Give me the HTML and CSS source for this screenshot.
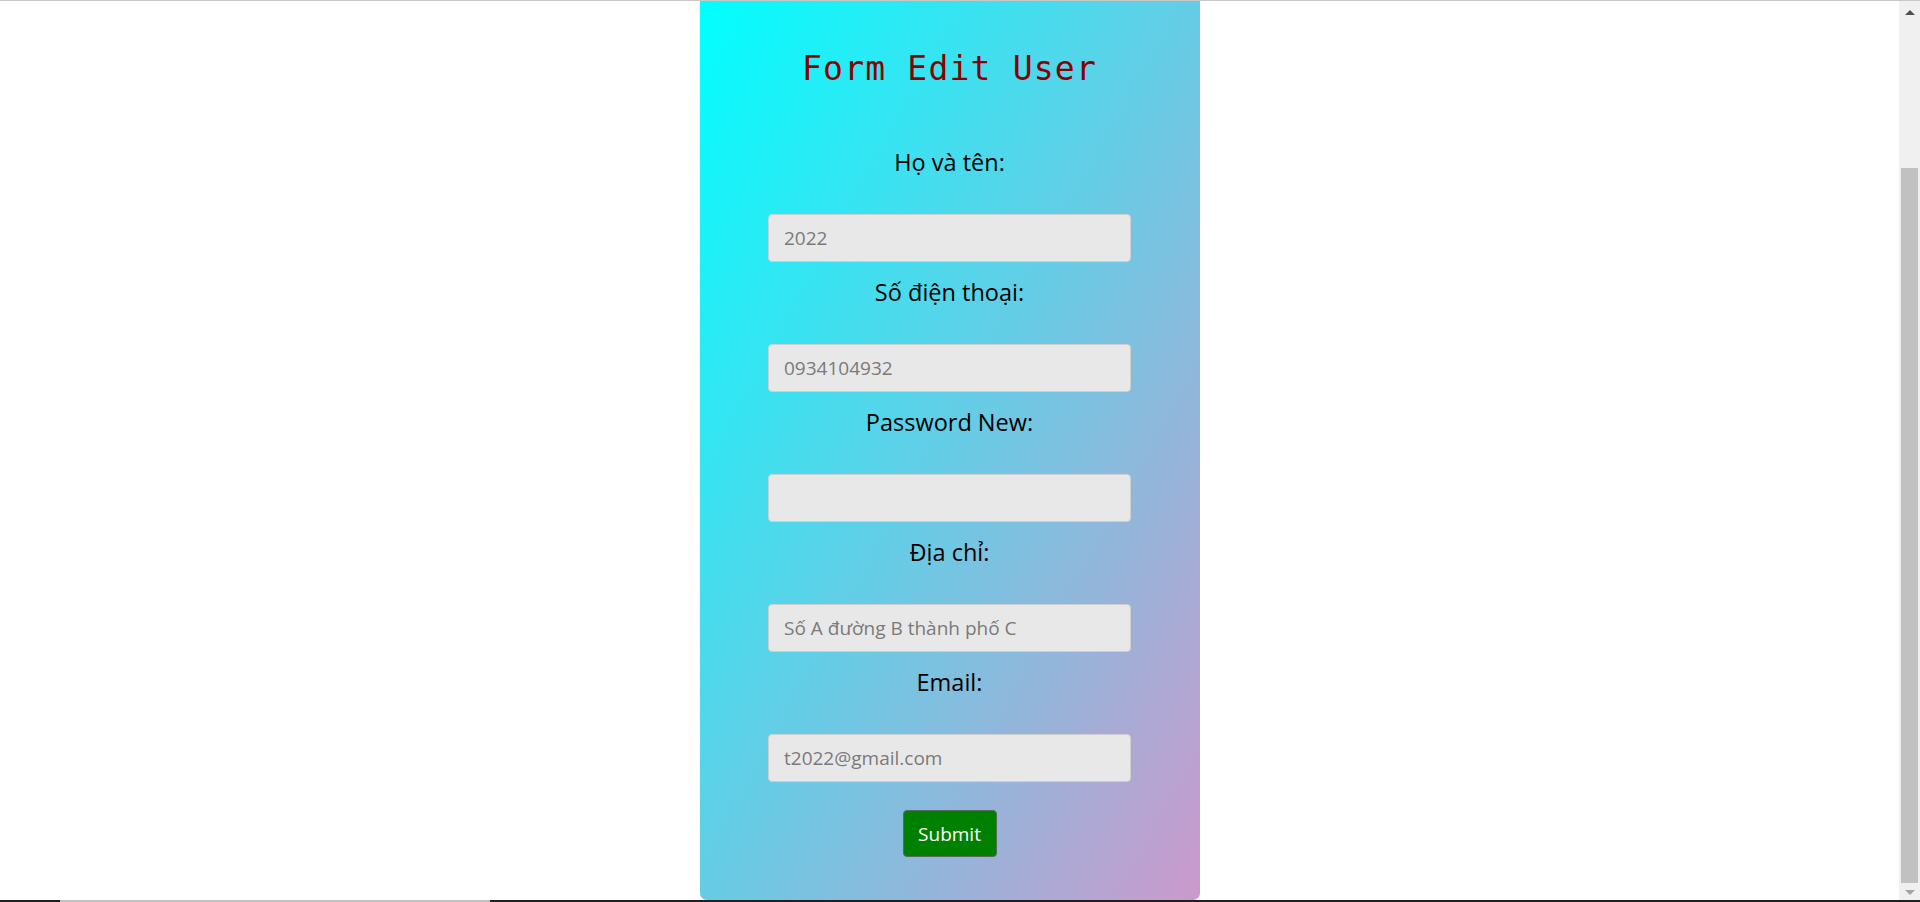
FILE: index.html
```html
<!DOCTYPE html>
<html lang="vi">
<head>
<meta charset="utf-8">
<title>Form Edit User</title>
<link rel="stylesheet" href="styles.css">
</head>
<body>
<div class="top-edge"></div>
<div class="viewport">
  <main class="page">
    <section class="card">
      <h1 class="title">Form Edit User</h1>
      <form class="form">
        <label class="field-label" for="name">Họ và tên:</label>
        <input class="field-input" id="name" type="text" placeholder="2022">
        <label class="field-label" for="phone">Số điện thoại:</label>
        <input class="field-input" id="phone" type="text" placeholder="0934104932">
        <label class="field-label" for="pass">Password New:</label>
        <input class="field-input" id="pass" type="password">
        <label class="field-label" for="addr">Địa chỉ:</label>
        <input class="field-input" id="addr" type="text" placeholder="Số A đường B thành phố C">
        <label class="field-label" for="email">Email:</label>
        <input class="field-input" id="email" type="text" placeholder="t2022@gmail.com">
        <button class="submit" type="button">Submit</button>
      </form>
    </section>
  </main>
  <div class="scrollbar">
    <span class="arrow arrow-up"></span>
    <span class="thumb-space"></span>
    <span class="thumb"></span>
    <span class="arrow arrow-down"></span>
  </div>
</div>
<div class="bottom-edge"></div>
</body>
</html>
```

FILE: styles.css
```css
* { box-sizing: border-box; }

html, body {
  margin: 0;
  padding: 0;
  height: 902px;
  overflow: hidden;
  background: #ffffff;
}

body {
  display: flex;
  flex-direction: column;
  font-family: "Open Sans", "Noto Sans", sans-serif;
}

.top-edge {
  height: 1px;
  background: #c8c8c8;
  flex: none;
}

.viewport {
  flex: 1;
  display: flex;
  min-height: 0;
}

.page {
  flex: 1;
  display: flex;
  justify-content: center;
}

.card {
  width: 500px;
  height: 899px;
  background: linear-gradient(to bottom right, #00ffff, #cc99cc);
  border-radius: 0 0 7px 7px;
  padding-top: 48px;
  display: flex;
  flex-direction: column;
  align-items: center;
}

.title {
  margin: 0 0 57px;
  font-family: "DejaVu Sans Mono", "Liberation Mono", monospace;
  font-weight: normal;
  font-size: 33px;
  line-height: 40px;
  letter-spacing: 1.2px;
  color: #8b0000;
}

.form {
  display: flex;
  flex-direction: column;
  align-items: center;
}

.field-label {
  display: block;
  font-size: 23.5px;
  line-height: 32px;
  color: #000;
  margin: 14px 0 36px;
}

.form .field-label:first-child {
  margin-top: 0;
}

.field-input {
  width: 363px;
  height: 48px;
  margin: 0;
  padding: 0 15px;
  border: 1px solid #cfcfcf;
  border-radius: 4px;
  background: #e8e8e8;
  font-family: "Open Sans", "Noto Sans", sans-serif;
  font-size: 19px;
  color: #333;
  outline: none;
}

.field-input::placeholder {
  color: #7a7a7a;
  opacity: 1;
}

.submit {
  margin-top: 28px;
  width: 94px;
  height: 47px;
  padding: 0;
  border: 1px solid #5a6a5a;
  border-radius: 4px;
  background: #008000;
  color: #ffffff;
  font-family: "Open Sans", "Noto Sans", sans-serif;
  font-size: 19px;
}

.scrollbar {
  width: 21px;
  flex: none;
  background: #f0f0f0;
  display: flex;
  flex-direction: column;
  align-items: center;
  padding-top: 9px;
  padding-bottom: 5px;
}

.arrow {
  width: 0;
  height: 0;
  border-left: 5px solid transparent;
  border-right: 5px solid transparent;
  flex: none;
}

.arrow-up {
  border-bottom: 5px solid #505050;
}

.arrow-down {
  border-top: 5px solid #a3a3a3;
  margin-top: 7px;
}

.thumb-space {
  height: 153px;
  flex: none;
}

.thumb {
  width: 17px;
  flex: 1;
  background: #c1c1c1;
}

.bottom-edge {
  height: 2px;
  flex: none;
  background: linear-gradient(to right, #1f1f1f 0 60px, #c0c0c0 60px 490px, #1f1f1f 490px);
}
```
